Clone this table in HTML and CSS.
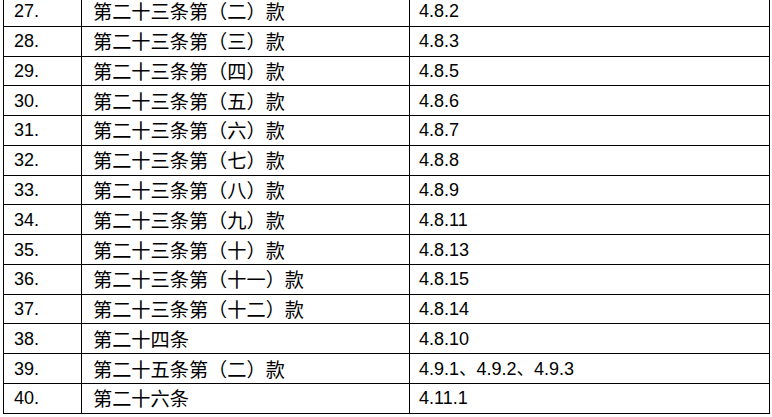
FILE: index.html
```html
<!DOCTYPE html>
<html lang="zh">
<head>
<meta charset="utf-8">
<link rel="stylesheet" href="styles.css">
</head>
<body>
<div class="frame">
<table class="grid">
<colgroup><col class="c1"><col class="c2"><col class="c3"></colgroup>
<tbody>
<tr><td class="num">27.</td><td class="zh">第二十三条第（二）款</td><td class="ref">4.8.2</td></tr>
<tr><td class="num">28.</td><td class="zh">第二十三条第（三）款</td><td class="ref">4.8.3</td></tr>
<tr><td class="num">29.</td><td class="zh">第二十三条第（四）款</td><td class="ref">4.8.5</td></tr>
<tr><td class="num">30.</td><td class="zh">第二十三条第（五）款</td><td class="ref">4.8.6</td></tr>
<tr><td class="num">31.</td><td class="zh">第二十三条第（六）款</td><td class="ref">4.8.7</td></tr>
<tr><td class="num">32.</td><td class="zh">第二十三条第（七）款</td><td class="ref">4.8.8</td></tr>
<tr><td class="num">33.</td><td class="zh">第二十三条第（八）款</td><td class="ref">4.8.9</td></tr>
<tr><td class="num">34.</td><td class="zh">第二十三条第（九）款</td><td class="ref">4.8.11</td></tr>
<tr><td class="num">35.</td><td class="zh">第二十三条第（十）款</td><td class="ref">4.8.13</td></tr>
<tr><td class="num">36.</td><td class="zh">第二十三条第（十一）款</td><td class="ref">4.8.15</td></tr>
<tr><td class="num">37.</td><td class="zh">第二十三条第（十二）款</td><td class="ref">4.8.14</td></tr>
<tr><td class="num">38.</td><td class="zh">第二十四条</td><td class="ref">4.8.10</td></tr>
<tr><td class="num">39.</td><td class="zh">第二十五条第（二）款</td><td class="ref">4.9.1<span class="sep">、</span>4.9.2<span class="sep">、</span>4.9.3</td></tr>
<tr><td class="num">40.</td><td class="zh">第二十六条</td><td class="ref">4.11.1</td></tr>
</tbody>
</table>
</div>
</body>
</html>
```

FILE: styles.css
```css
html, body {
  margin: 0;
  padding: 0;
  background: #fff;
}
.frame {
  height: 417px;
  overflow: hidden;
  padding-left: 3px;
}
.grid {
  margin-top: -4px;
  border-collapse: collapse;
  table-layout: fixed;
  width: 766px;
  color: #000;
  font-family: "Liberation Sans", "Noto Sans CJK SC", sans-serif;
}
.c1 { width: 78px; }
.c2 { width: 328px; }
.c3 { width: 360px; }
.grid tr {
  height: 29.77px;
}
.grid td {
  border: 1px solid #000;
  padding: 0 0 0 10px;
  vertical-align: middle;
  white-space: nowrap;
  line-height: 16px;
}
.num, .ref {
  font-size: 18px;
}
.zh {
  font-family: "Noto Sans CJK SC", sans-serif;
  font-size: 19.2px;
  padding-left: 11px;
}
.grid td.zh {
  padding-left: 11px;
}
.grid td.ref {
  padding-left: 9px;
}
.sep {
  font-family: "Noto Sans CJK SC", sans-serif;
  font-size: 17.5px;
  line-height: 16px;
}
```
